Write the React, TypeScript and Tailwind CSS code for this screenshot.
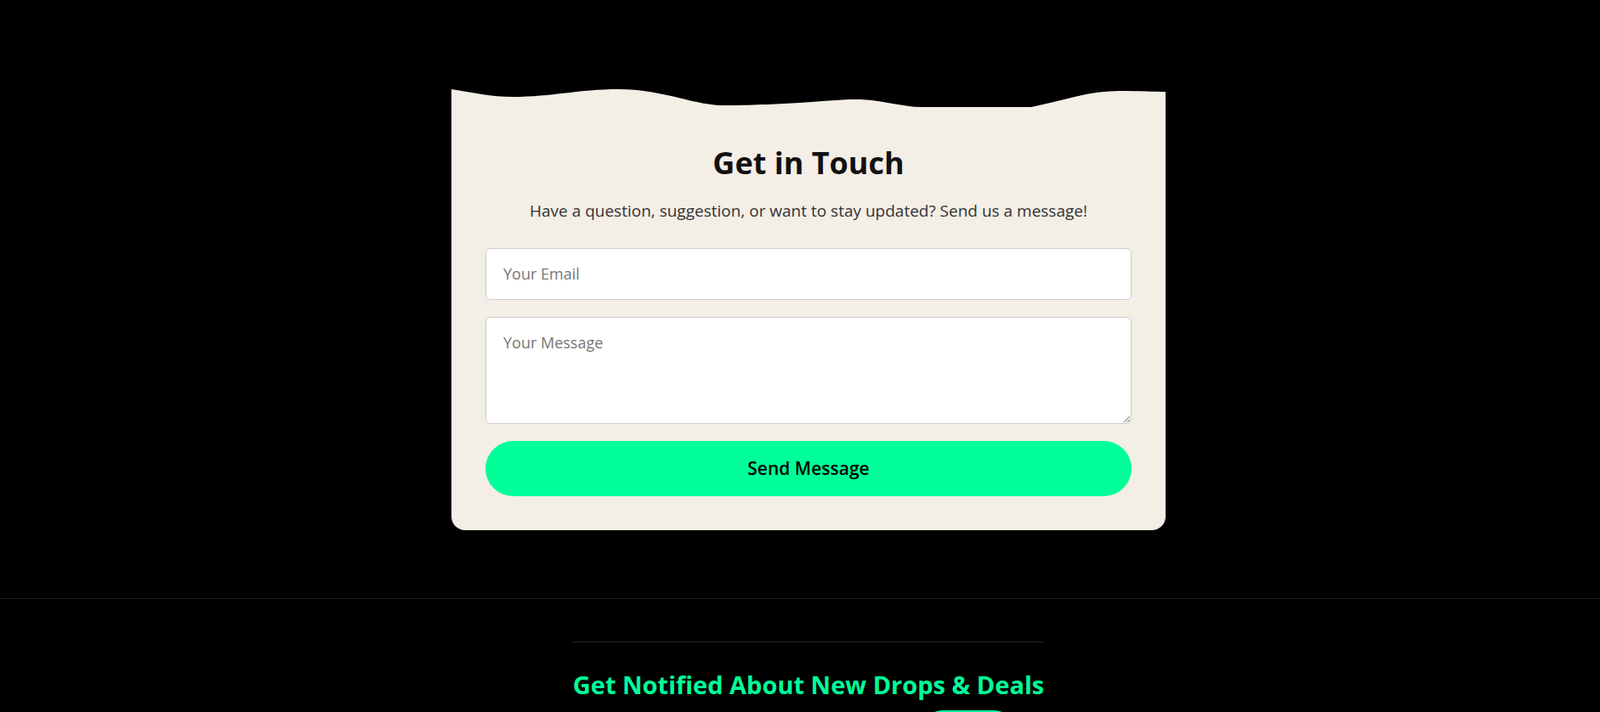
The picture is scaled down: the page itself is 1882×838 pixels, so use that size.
import { useState } from 'react';

const font = { fontFamily: '"Open Sans", "Noto Sans", sans-serif' };

function Wave() {
  return (
    <svg className="block h-[34px] w-[840px]" viewBox="0 0 840 34" preserveAspectRatio="none">
      <path
        d="M0 1 C24 5 48 10 72 10 C118 10 150 1 196 1 C250 1 285 20 322 20 C360 20 385 18 409 17 C440 15 460 13 476 13 C505 13 530 22 552 22 L682 22 C720 14 750 3 786 3 C810 3 825 4 840 4 L840 34 L0 34 Z"
        fill="#f3eee6"
      />
    </svg>
  );
}

function ContactCard() {
  const [email, setEmail] = useState('');
  const [message, setMessage] = useState('');

  return (
    <div className="mx-auto w-[840px]">
      <Wave />
      <div className="rounded-b-2xl bg-[#f3eee6] px-10 pt-8 pb-10">
        <h2 className="text-center text-[36px] leading-[44px] font-bold text-[#111]">Get in Touch</h2>
        <p className="mt-5 text-center text-[19px] leading-[28px] text-[#333]">
          Have a question, suggestion, or want to stay updated? Send us a message!
        </p>
        <form className="mt-[30px] flex flex-col gap-5" onSubmit={(e) => e.preventDefault()}>
          <input
            type="email"
            value={email}
            onChange={(e) => setEmail(e.target.value)}
            placeholder="Your Email"
            className="block w-full rounded-md border border-[#cccccc] bg-white px-5 py-4 text-[18px] leading-[27px] text-[#222] placeholder:text-[#777] outline-none"
            style={font}
          />
          <textarea
            value={message}
            onChange={(e) => setMessage(e.target.value)}
            placeholder="Your Message"
            className="block h-[126px] w-full rounded-md border border-[#cccccc] bg-white px-5 py-4 text-[18px] leading-[27px] text-[#222] placeholder:text-[#777] outline-none"
            style={font}
          />
          <button
            type="submit"
            className="h-[65px] w-full rounded-full bg-[#00ff99] text-[21px] font-semibold text-black"
            style={font}
          >
            Send Message
          </button>
        </form>
      </div>
    </div>
  );
}

function Footer() {
  return (
    <footer className="border-t border-[#1c1c1c] pt-[50px] pl-[20px]">
      <div className="mx-auto w-fit border-t border-[#222] pt-8">
        <h3 className="text-center text-[29px] leading-[36px] font-bold text-[#00ff99]">
          Get Notified About New Drops &amp; Deals
        </h3>
        <div className="mt-3 flex items-start justify-center gap-[45px]">
          <input
            type="email"
            placeholder="Enter your email"
            className="mt-[2px] h-11 w-[330px] rounded-md border border-[#555] bg-black px-4 text-[16px] text-white outline-none"
            style={font}
          />
          <button className="h-12 w-[108px] rounded-full bg-[#00ff99] text-[16px] font-semibold text-black" style={font}>
            Subscribe
          </button>
        </div>
      </div>
    </footer>
  );
}

export default function App() {
  return (
    <div className="min-h-screen overflow-hidden bg-black" style={font}>
      <section className="pt-[104px] pb-20 pl-[20px]">
        <ContactCard />
      </section>
      <Footer />
    </div>
  );
}
